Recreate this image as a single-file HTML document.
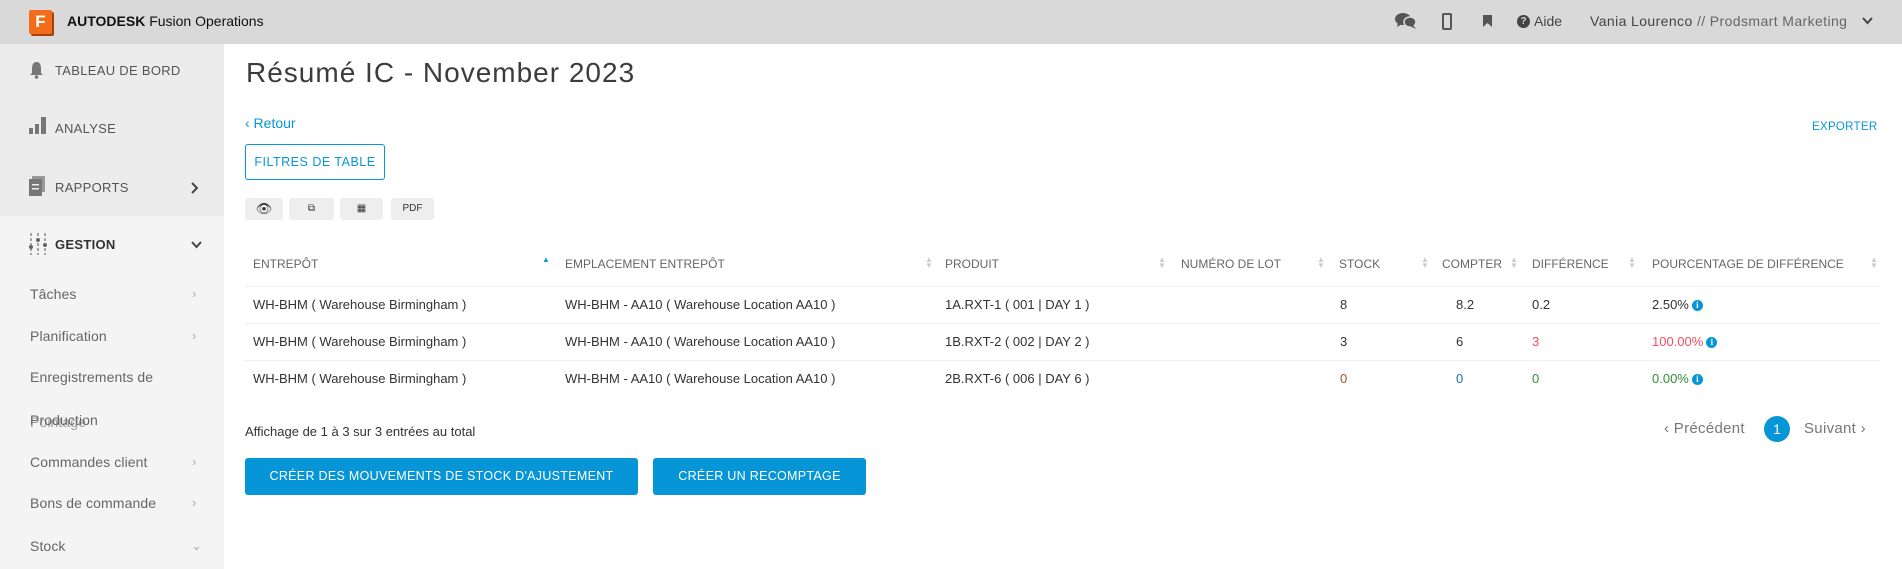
<!DOCTYPE html>
<html><head><meta charset="utf-8"><style>
*{margin:0;padding:0;box-sizing:border-box}
body{width:1902px;height:569px;overflow:hidden;background:#fff;font-family:"Liberation Sans",sans-serif;color:#3c3c3c;position:relative}
.a{position:absolute;white-space:nowrap}
#top{position:absolute;left:0;top:0;width:1902px;height:44px;background:#d9d9d9}
#side1{position:absolute;left:0;top:44px;width:224px;height:172px;background:#ececec}
#side2{position:absolute;left:0;top:216px;width:224px;height:353px;background:#f4f4f4}
.nav{font-size:13px;letter-spacing:0.3px;color:#555}
.sub{font-size:14px;color:#666;letter-spacing:0.1px}
.chev{font-size:13px;color:#aaa}
.th{font-size:12px;color:#666;letter-spacing:0px;top:257px}
.td{font-size:13px;color:#333}
.sort{font-size:8px;color:#ccc;line-height:6px}
.line{position:absolute;left:245px;width:1635px;height:1px;background:#eee}
.ib{position:absolute;top:198px;height:22px;background:#eee;border-radius:3px;font-size:10px;text-align:center;line-height:22px;color:#333}
.btn{position:absolute;top:458px;height:37px;background:#0696d7;color:#fff;border-radius:3px;font-size:12.5px;letter-spacing:0.3px;text-align:center;line-height:37px}
.info{display:inline-block;width:11px;height:11px;border-radius:50%;background:#0696d7;color:#fff;font-size:9px;font-weight:bold;text-align:center;line-height:11px;vertical-align:1px;margin-left:3px;font-family:"Liberation Serif",serif}
</style></head><body>
<div id="top"></div>
<div class="a" style="left:29px;top:10px;width:23px;height:24px;background:#f26c1b;border-radius:2px;box-shadow:2px 2px 0 #a8410a;color:#fff;font-weight:bold;font-size:17px;text-align:center;line-height:24px">F</div>
<div class="a" style="left:67px;top:13px;font-size:14px;color:#111"><b>AUTODESK</b> Fusion Operations</div>
<svg class="a" style="left:1395px;top:12px" width="22" height="18" viewBox="0 0 22 18"><ellipse cx="8" cy="7" rx="8" ry="6" fill="#555"/><path d="M3 11 L2 15 L7 12Z" fill="#555"/><ellipse cx="15" cy="10" rx="6" ry="5" fill="#555" stroke="#d9d9d9" stroke-width="1.5"/><path d="M18 13 L21 17 L15 14Z" fill="#555"/></svg>
<div class="a" style="left:1442px;top:13px;width:10px;height:17px;border:2px solid #555;border-radius:2px"></div>
<svg class="a" style="left:1483px;top:15px" width="9" height="12"><path d="M0 0H9V12L4.5 8L0 12Z" fill="#555"/></svg>
<div class="a" style="left:1517px;top:15px;width:13px;height:13px;border-radius:50%;background:#444;color:#d9d9d9;font-size:10px;font-weight:bold;text-align:center;line-height:13px">?</div>
<div class="a" style="left:1534px;top:13px;font-size:14px;color:#444">Aide</div>
<div class="a" style="left:1590px;top:13px;font-size:14px;color:#444;letter-spacing:0.4px">Vania Lourenco <span style="color:#666">// Prodsmart Marketing</span></div>
<svg class="a" style="left:1862px;top:17px" width="11" height="8"><path d="M1 1L5.5 6L10 1" stroke="#444" stroke-width="2" fill="none"/></svg>

<div id="side1"></div><div id="side2"></div>
<svg class="a" style="left:29px;top:61px" width="15" height="18"><path d="M7.5 1C3.5 1 3 5 3 8V12L1 14H14L12 12V8C12 5 11.5 1 7.5 1Z" fill="#777"/><circle cx="7.5" cy="16" r="1.8" fill="#777"/></svg>
<div class="a nav" style="left:55px;top:63px">TABLEAU DE BORD</div>
<svg class="a" style="left:29px;top:116px" width="18" height="18"><rect x="0" y="12" width="4" height="6" fill="#777"/><rect x="6" y="8" width="4" height="10" fill="#777"/><rect x="12" y="1" width="5" height="17" fill="#777"/></svg>
<div class="a nav" style="left:55px;top:121px">ANALYSE</div>
<svg class="a" style="left:29px;top:176px" width="16" height="20"><rect x="3" y="0" width="13" height="16" fill="#999"/><rect x="0" y="3" width="13" height="17" fill="#777"/><rect x="3" y="8" width="7" height="1.5" fill="#ececec"/><rect x="3" y="12" width="7" height="1.5" fill="#ececec"/></svg>
<div class="a nav" style="left:55px;top:180px">RAPPORTS</div>
<svg class="a" style="left:191px;top:182px" width="8" height="12"><path d="M1 1L6 6L1 11" stroke="#444" stroke-width="2" fill="none"/></svg>
<svg class="a" style="left:29px;top:233px" width="18" height="22"><path d="M2 0V22M9 0V22M16 0V22" stroke="#888" stroke-width="1.5" stroke-dasharray="3 2"/><circle cx="2" cy="14" r="2" fill="#666"/><circle cx="9" cy="7" r="2" fill="#666"/><circle cx="16" cy="12" r="2" fill="#666"/></svg>
<div class="a nav" style="left:55px;top:237px;color:#333;font-weight:bold">GESTION</div>
<svg class="a" style="left:191px;top:241px" width="11" height="8"><path d="M1 1L5.5 6L10 1" stroke="#444" stroke-width="2" fill="none"/></svg>
<div class="a sub" style="left:30px;top:286px">Tâches</div><div class="a chev" style="left:192px;top:286px">›</div>
<div class="a sub" style="left:30px;top:328px">Planification</div><div class="a chev" style="left:192px;top:328px">›</div>
<div class="a sub" style="left:30px;top:369px">Enregistrements de</div>
<div class="a sub" style="left:30px;top:412px">Production</div>
<div class="a sub" style="left:30px;top:414px;opacity:.6">Pointage</div>
<div class="a sub" style="left:30px;top:454px">Commandes client</div><div class="a chev" style="left:192px;top:454px">›</div>
<div class="a sub" style="left:30px;top:495px">Bons de commande</div><div class="a chev" style="left:192px;top:495px">›</div>
<div class="a sub" style="left:30px;top:538px">Stock</div><div class="a chev" style="left:191px;top:538px">⌄</div>

<div class="a" style="left:246px;top:57px;font-size:28px;color:#3c3c3c;letter-spacing:1px">Résumé IC - November 2023</div>
<div class="a" style="left:245px;top:115px;font-size:14px;color:#0696d7">‹ Retour</div>
<div class="a" style="left:1812px;top:121px;font-size:11.5px;color:#0696d7;letter-spacing:0.3px">EXPORTER</div>
<div class="a" style="left:245px;top:144px;width:140px;height:36px;border:1px solid #0696d7;border-radius:3px;color:#0696d7;font-size:12.5px;letter-spacing:0.5px;text-align:center;line-height:34px">FILTRES DE TABLE</div>
<div class="ib" style="left:245px;width:38px;font-size:13px">👁</div>
<div class="ib" style="left:289px;width:45px">⧉</div>
<div class="ib" style="left:340px;width:43px">▦</div>
<div class="ib" style="left:391px;width:43px">PDF</div>

<div class="a th" style="left:253px">ENTREPÔT</div>
<div class="a" style="left:542px;top:255px;font-size:8px;color:#0696d7">▲</div>
<div class="a th" style="left:565px">EMPLACEMENT ENTREPÔT</div>
<div class="a th" style="left:945px">PRODUIT</div>
<div class="a th" style="left:1181px">NUMÉRO DE LOT</div>
<div class="a th" style="left:1339px">STOCK</div>
<div class="a th" style="left:1442px">COMPTER</div>
<div class="a th" style="left:1532px">DIFFÉRENCE</div>
<div class="a th" style="left:1652px">POURCENTAGE DE DIFFÉRENCE</div>
<div class="a sort" style="left:925px;top:257px">▲<br>▼</div>
<div class="a sort" style="left:1158px;top:257px">▲<br>▼</div>
<div class="a sort" style="left:1317px;top:257px">▲<br>▼</div>
<div class="a sort" style="left:1421px;top:257px">▲<br>▼</div>
<div class="a sort" style="left:1510px;top:257px">▲<br>▼</div>
<div class="a sort" style="left:1628px;top:257px">▲<br>▼</div>
<div class="a sort" style="left:1870px;top:257px">▲<br>▼</div>
<div class="line" style="top:286px"></div>
<div class="line" style="top:323px"></div>
<div class="line" style="top:360px"></div>

<div class="a td" style="left:253px;top:297px">WH-BHM ( Warehouse Birmingham )</div>
<div class="a td" style="left:565px;top:297px">WH-BHM - AA10 ( Warehouse Location AA10 )</div>
<div class="a td" style="left:945px;top:297px">1A.RXT-1 ( 001 | DAY 1 )</div>
<div class="a td" style="left:1340px;top:297px">8</div>
<div class="a td" style="left:1456px;top:297px">8.2</div>
<div class="a td" style="left:1532px;top:297px">0.2</div>
<div class="a td" style="left:1652px;top:297px">2.50%<span class="info">i</span></div>

<div class="a td" style="left:253px;top:334px">WH-BHM ( Warehouse Birmingham )</div>
<div class="a td" style="left:565px;top:334px">WH-BHM - AA10 ( Warehouse Location AA10 )</div>
<div class="a td" style="left:945px;top:334px">1B.RXT-2 ( 002 | DAY 2 )</div>
<div class="a td" style="left:1340px;top:334px">3</div>
<div class="a td" style="left:1456px;top:334px">6</div>
<div class="a td" style="left:1532px;top:334px;color:#f04e5e">3</div>
<div class="a td" style="left:1652px;top:334px;color:#f04e5e">100.00%<span class="info">i</span></div>

<div class="a td" style="left:253px;top:371px">WH-BHM ( Warehouse Birmingham )</div>
<div class="a td" style="left:565px;top:371px">WH-BHM - AA10 ( Warehouse Location AA10 )</div>
<div class="a td" style="left:945px;top:371px">2B.RXT-6 ( 006 | DAY 6 )</div>
<div class="a td" style="left:1340px;top:371px;color:#a0522d">0</div>
<div class="a td" style="left:1456px;top:371px;color:#1a6fa8">0</div>
<div class="a td" style="left:1532px;top:371px;color:#3a8a3a">0</div>
<div class="a td" style="left:1652px;top:371px;color:#3a8a3a">0.00%<span class="info">i</span></div>

<div class="a" style="left:245px;top:424px;font-size:13px;color:#333">Affichage de 1 à 3 sur 3 entrées au total</div>
<div class="a" style="left:1664px;top:420px;font-size:15px;color:#777;letter-spacing:0.3px">‹ Précédent</div>
<div class="a" style="left:1764px;top:416px;width:26px;height:26px;border-radius:50%;background:#0696d7;color:#fff;font-size:14px;text-align:center;line-height:26px">1</div>
<div class="a" style="left:1804px;top:420px;font-size:15px;color:#777;letter-spacing:0.3px">Suivant ›</div>

<div class="btn" style="left:245px;width:393px">CRÉER DES MOUVEMENTS DE STOCK D'AJUSTEMENT</div>
<div class="btn" style="left:653px;width:213px">CRÉER UN RECOMPTAGE</div>
</body></html>
